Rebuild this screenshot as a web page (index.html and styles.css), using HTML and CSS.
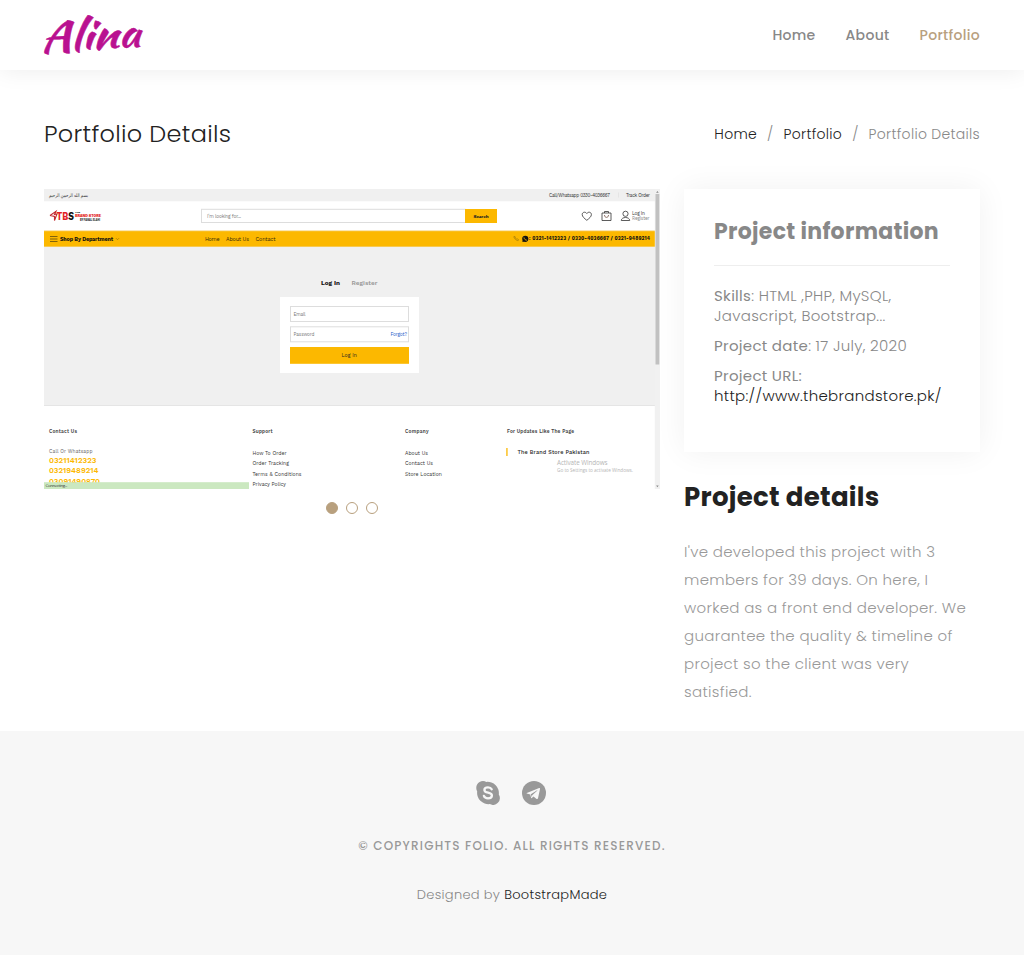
FILE: index.html
```
<!DOCTYPE html>
<html lang="en">
<head>
<meta charset="utf-8">
<title>Alina - Portfolio Details</title>
<link rel="stylesheet" href="styles.css">
</head>
<body>
<header class="header">
  <a class="logo" href="#" aria-label="Alina">
    <svg width="102" height="44" viewBox="0 0 102 44"><text class="logo-text" x="-3" y="36" textLength="100" lengthAdjust="spacingAndGlyphs" transform="rotate(-3 48 30)">Alina</text></svg>
  </a>
  <nav class="nav">
    <a href="#">Home</a>
    <a href="#">About</a>
    <a class="active" href="#">Portfolio</a>
  </nav>
</header>

<main class="main">
  <div class="page-head">
    <h1>Portfolio Details</h1>
    <ol class="crumbs">
      <li><a href="#">Home</a></li>
      <li><a href="#">Portfolio</a></li>
      <li class="current">Portfolio Details</li>
    </ol>
  </div>

  <div class="content">
    <section class="gallery">
      <svg class="slide" width="616" height="300" viewBox="44 189 616 300">
        <rect x="44" y="189" width="616" height="300" fill="#fff"/>
        <rect x="44" y="189" width="611" height="12.3" fill="#f0f0f0"/>
        <text x="49" y="197" font-size="5" fill="#333" textLength="39" lengthAdjust="spacingAndGlyphs" direction="rtl" text-anchor="end" class="arabic">بسم الله الرحمن الرحيم</text>
        <g font-size="4.7" fill="#333">
          <text x="549" y="196.500" textLength="61">Call/Whatsapp 0330-4036667</text>
          <text x="626" y="196.500" textLength="24">Track Order</text>
        </g>
        <path d="M618.500 192.500v5" stroke="#ddd" stroke-width=".6"/>

        <!-- store header -->
        <path d="M50 215.500l6-4.200-1.500 3.200 2.500-.5-1 2.500M50 215.500l4.500 1v4l1.500-4" fill="none" stroke="#c22b30" stroke-width="1.100"/>
        <text x="56.500" y="220.200" font-size="11.600" font-weight="700" fill="#e31e25" textLength="17.500" lengthAdjust="spacingAndGlyphs">TB<tspan fill="#111">S</tspan></text>
        <text x="75" y="213.300" font-size="2.600" font-weight="700" fill="#222">THE</text>
        <text x="75" y="217.200" font-size="4.200" font-weight="800" fill="#e31e25" textLength="26" lengthAdjust="spacingAndGlyphs">BRAND STORE</text>
        <text x="80" y="220.600" font-size="2.900" font-weight="700" fill="#222" textLength="20" lengthAdjust="spacingAndGlyphs">BY FAISAL ELAHI</text>
        <rect x="201.500" y="209.300" width="264" height="13.200" fill="#fff" stroke="#ddd"/>
        <text x="207" y="217.700" font-size="4.800" fill="#777" textLength="34">I'm looking for...</text>
        <rect x="465" y="209" width="32" height="14" fill="#fcb800"/>
        <text x="473.500" y="217.600" font-size="4.600" font-weight="700" fill="#222" textLength="15">Search</text>
        <g fill="none" stroke="#333" stroke-width=".8">
          <path d="M586.800 220.300c-2.500-2-4.600-3.600-4.600-5.800 0-2.400 3.100-3.200 4.600-1 1.500-2.200 4.600-1.400 4.600 1 0 2.200-2.100 3.800-4.600 5.800z"/>
          <path d="M602 213h9v7.500h-9zM604.500 213v-1.500h4v1.500"/>
          <path d="M604.500 215c0 3.200 4 3.200 4 0" stroke="#745044"/>
          <circle cx="625.500" cy="213.800" r="2.600"/>
          <path d="M621.300 220.500c0-4 8.400-4 8.400 0z"/>
        </g>
        <text x="632" y="214.600" font-size="4.800" fill="#333" textLength="13">Log In</text>
        <text x="632" y="219.700" font-size="4.800" fill="#888" textLength="17.500">Register</text>

        <!-- menu bar -->
        <rect x="44" y="230.500" width="611" height="16.500" fill="#f5ce67"/>
        <rect x="44" y="231.300" width="611" height="14.900" fill="#fcb800"/>
        <path d="M50 236.500h7.500M50 239h7.500M50 241.500h7.500" stroke="#5e4b10" stroke-width=".8"/>
        <text x="60" y="240.700" font-size="5.400" font-weight="700" fill="#111" textLength="53">Shop By Department</text>
        <path d="M116 238.200l1.500 1.500 1.500-1.500" fill="none" stroke="#765a0b" stroke-width=".5"/>
        <g font-size="5.400" fill="#36290a">
          <text x="205" y="240.700" textLength="14.500">Home</text>
          <text x="226" y="240.700" textLength="23">About Us</text>
          <text x="255.500" y="240.700" textLength="20">Contact</text>
        </g>
        <path d="M514 236.300c-.8 1.400 2.600 4.700 4.200 4.300l.4-1-1.400-.8-.6.400-1.400-1.500.4-.6z" fill="none" stroke="#80640f" stroke-width=".5"/>
        <circle cx="525.300" cy="238.800" r="3.100" fill="#111"/>
        <path d="M522.300 242l.5-2 1.500 1.500z" fill="#111"/>
        <path d="M524 237.500c.1 1.500 1.400 2.700 2.800 2.700" stroke="#fcb800" stroke-width=".9" fill="none"/>
        <text x="529" y="240.300" font-size="4.900" font-weight="700" fill="#111" textLength="121">: 0321-1412323 / 0330-4036667 / 0321-9489214</text>

        <!-- login form -->
        <rect x="44" y="247" width="611" height="158.500" fill="#f0f0f0"/>
        <rect x="44" y="405" width="611" height="1" fill="#e5e5e5"/>
        <text x="321" y="285.200" font-size="6.300" font-weight="700" fill="#111" textLength="19" lengthAdjust="spacingAndGlyphs">Log In</text>
        <text x="351.500" y="285.200" font-size="6.300" font-weight="600" fill="#999" textLength="26" lengthAdjust="spacingAndGlyphs">Register</text>
        <rect x="280" y="297" width="139" height="76" fill="#fff"/>
        <g fill="#fff" stroke="#ddd">
          <rect x="290.500" y="306.500" width="118" height="15"/>
          <rect x="290.500" y="326.800" width="118" height="15"/>
        </g>
        <text x="293.500" y="315.700" font-size="4.700" fill="#777" textLength="12">Email</text>
        <text x="293.500" y="336" font-size="4.700" fill="#777" textLength="21">Password</text>
        <text x="390.500" y="336" font-size="4.800" fill="#2058c7" textLength="16.500">Forgot?</text>
        <rect x="290" y="347" width="119" height="16.800" fill="#fcb800"/>
        <text x="341.500" y="357.200" font-size="5.200" fill="#222" textLength="15.500">Log In</text>

        <!-- store footer -->
        <g font-size="4.800" font-weight="600" fill="#444">
          <text x="49" y="433.200" textLength="28">Contact Us</text>
          <text x="252.500" y="433.200" textLength="20">Support</text>
          <text x="405" y="433.200" textLength="23.500">Company</text>
          <text x="507" y="433.200" textLength="67">For Updates Like The Page</text>
        </g>
        <text x="49" y="453.200" font-size="4.900" fill="#666" textLength="43.500">Call Or Whatsapp</text>
        <g font-size="7.600" font-weight="600" fill="#fcb800">
          <text x="49" y="463" textLength="47.500" lengthAdjust="spacingAndGlyphs">03211412323</text>
          <text x="49" y="473.400" textLength="49.500" lengthAdjust="spacingAndGlyphs">03219489214</text>
          <text x="49" y="483.800" textLength="51" lengthAdjust="spacingAndGlyphs">03091490870</text>
        </g>
        <g font-size="5.100" fill="#333">
          <text x="252.500" y="455" textLength="34">How To Order</text>
          <text x="252.500" y="465.200" textLength="36.500">Order Tracking</text>
          <text x="252.500" y="475.500" textLength="49">Terms &amp; Conditions</text>
          <text x="252.500" y="485.800" textLength="33.500">Privacy Policy</text>
          <text x="405" y="455" textLength="23">About Us</text>
          <text x="405" y="465.200" textLength="28">Contact Us</text>
          <text x="405" y="475.500" textLength="37">Store Location</text>
        </g>
        <rect x="506" y="448" width="1.800" height="8" fill="#fccb48"/>
        <text x="517.500" y="453.800" font-size="5.500" font-weight="500" fill="#222" textLength="72">The Brand Store Pakistan</text>
        <g class="system" fill="#b5b5b5">
          <text x="557" y="465" font-size="6.300" textLength="50.500">Activate Windows</text>
          <text x="557" y="471.800" font-size="4.700" textLength="76">Go to Settings to activate Windows.</text>
        </g>
        <rect x="44" y="482.200" width="205" height="7" fill="#cbe8c0"/>
        <text class="system" x="45.500" y="487.300" font-size="4.300" fill="#333" textLength="22">Connecting...</text>

        <!-- scrollbar -->
        <rect x="654.800" y="189" width="5.200" height="300" fill="#f1f1f1"/>
        <rect x="655.500" y="194" width="3.800" height="170.500" fill="#c1c1c1"/>
        <path d="M657.400 191l1.300 1.700h-2.600zM657.400 487.300l1.300-1.800h-2.600z" fill="#888"/>
      </svg>
      <div class="dots"><span class="dot on"></span><span class="dot"></span><span class="dot"></span></div>
    </section>

    <aside class="side">
      <div class="card">
        <h3>Project information</h3>
        <ul>
          <li><strong>Skills</strong>: HTML ,PHP, MySQL,<br>Javascript, Bootstrap...</li>
          <li><strong>Project date</strong>: 17 July, 2020</li>
          <li><strong>Project URL:</strong><br><a href="#">http://www.thebrandstore.pk/</a></li>
        </ul>
      </div>
      <h2>Project details</h2>
      <p class="details">I've developed this project with 3<br>members for 39 days. On here, I<br>worked as a front end developer. We<br>guarantee the quality &amp; timeline of<br>project so the client was very<br>satisfied.</p>
    </aside>
  </div>
</main>

<footer class="footer">
  <div class="social">
    <a href="#" aria-label="Skype"><svg width="24" height="24" viewBox="0 0 24 24"><path fill="#999" d="M7 0a7 7 0 0 1 3.400.9A11.300 11.300 0 0 1 22.800 13.600 6.800 6.800 0 0 1 13.800 23.100 11.300 11.300 0 0 1 1.200 10.400 6.900 6.900 0 0 1 7 0z"/><path d="M15.700 8.300C15 6.900 13.700 6.300 12 6.300c-2.200 0-3.600 1-3.600 2.600 0 3.900 7.500 1.700 7.500 5.600 0 1.800-1.600 2.800-3.900 2.800-2 0-3.500-.8-4.100-2.400" fill="none" stroke="#f7f7f7" stroke-width="2.300" stroke-linecap="round"/></svg></a>
    <a href="#" aria-label="Telegram"><svg width="24" height="24" viewBox="0 0 24 24"><circle cx="12" cy="12" r="12" fill="#999"/><path fill="#f7f7f7" d="M4.800 11.900L17.200 7.100q1-.3.800 1l-2 9.200q-.3 1.200-1.400.6l-3.100-2.300-1.700 1.500q-.6.500-.7-.3l-.8-3.200-3.500-1.100q-.6-.3 0-.6z"/><path fill="#999" d="M8.800 13.300l6.400-4q.5-.2.200.2l-5.200 4.800-.3 2z"/></svg></a>
  </div>
  <p class="copyright">© Copyrights Folio. All rights reserved.</p>
  <p class="credits">Designed by <a href="#">BootstrapMade</a></p>
</footer>
</body>
</html>
```
FILE: styles.css
```
* { box-sizing: border-box; }
body {
  margin: 0;
  background: #fff;
  color: #888;
  font-family: Poppins, Inter, "Open Sans", sans-serif;
  font-size: 16px;
  font-weight: 300;
  letter-spacing: .3px;
}
a { color: #222; text-decoration: none; }
h1, h2, h3, p, ul, ol { margin: 0; padding: 0; }
ul, ol { list-style: none; }

.header {
  display: flex;
  align-items: center;
  justify-content: space-between;
  height: 70px;
  padding: 0 44px;
  box-shadow: 0 0 25px rgba(0, 0, 0, .08);
}
.logo, .logo svg { display: block; }
.logo svg { overflow: visible; }
.logo-text {
  font-family: "Kaushan Script", Yellowtail, "Dancing Script", Pacifico, "Liberation Serif", cursive;
  font-size: 41px;
  font-weight: 400;
  letter-spacing: 0;
  fill: #b91190;
  stroke: #b91190;
  stroke-width: .5px;
}
.nav { display: flex; gap: 30px; }
.nav a {
  color: #888;
  font-size: 14px;
  font-weight: 500;
  line-height: 22px;
}
.nav a.active { color: #b8a07e; }

.main { height: 661px; padding: 50px 44px 0; }
.page-head {
  display: flex;
  justify-content: space-between;
  align-items: center;
  height: 28px;
}
.page-head h1 {
  color: #222;
  font-size: 24px;
  font-weight: 300;
  line-height: 28px;
}
.crumbs { display: flex; font-size: 14px; line-height: 22px; }
.crumbs li + li::before { content: "/"; padding: 0 10px; }

.content {
  display: grid;
  grid-template-columns: 616px 296px;
  gap: 24px;
  margin-top: 41px;
}
.slide {
  display: block;
  font-family: "Work Sans", Inter, sans-serif;
  font-weight: 400;
  letter-spacing: 0;
}
.arabic { font-family: "DejaVu Sans", sans-serif; }
.system { font-family: "Open Sans", sans-serif; }
.dots { display: flex; justify-content: center; gap: 8px; margin-top: 13px; }
.dot { width: 12px; height: 12px; border: 1px solid #b8a07e; border-radius: 50%; }
.dot.on { background: #b8a07e; }

.side { white-space: nowrap; }
.card {
  height: 263px;
  padding: 30px;
  background: #fff;
  box-shadow: 0 0 30px rgba(0, 0, 0, .06);
}
.card h3 {
  height: 47px;
  margin-bottom: 20px;
  border-bottom: 1px solid #eee;
  font-size: 22px;
  font-weight: 700;
  line-height: 26px;
}
.card ul { font-size: 15px; line-height: 20px; }
.card li + li { margin-top: 10px; }
.card strong { font-weight: 400; }
.side h2 {
  margin-top: 29px;
  color: #222;
  font-size: 26px;
  font-weight: 700;
  line-height: 32px;
}
.details { margin-top: 25px; color: #999; font-size: 15px; line-height: 28px; }

.footer {
  height: 224px;
  padding-top: 50px;
  background: #f7f7f7;
  text-align: center;
}
.social { display: flex; justify-content: center; gap: 22px; padding-right: 3px; height: 24px; }
.social svg { display: block; }
.copyright {
  margin-top: 31px;
  color: #999;
  font-size: 12px;
  font-weight: 500;
  letter-spacing: 1.2px;
  line-height: 20px;
  text-transform: uppercase;
}
.credits { margin-top: 28px; font-size: 13px; line-height: 21px; }
```
